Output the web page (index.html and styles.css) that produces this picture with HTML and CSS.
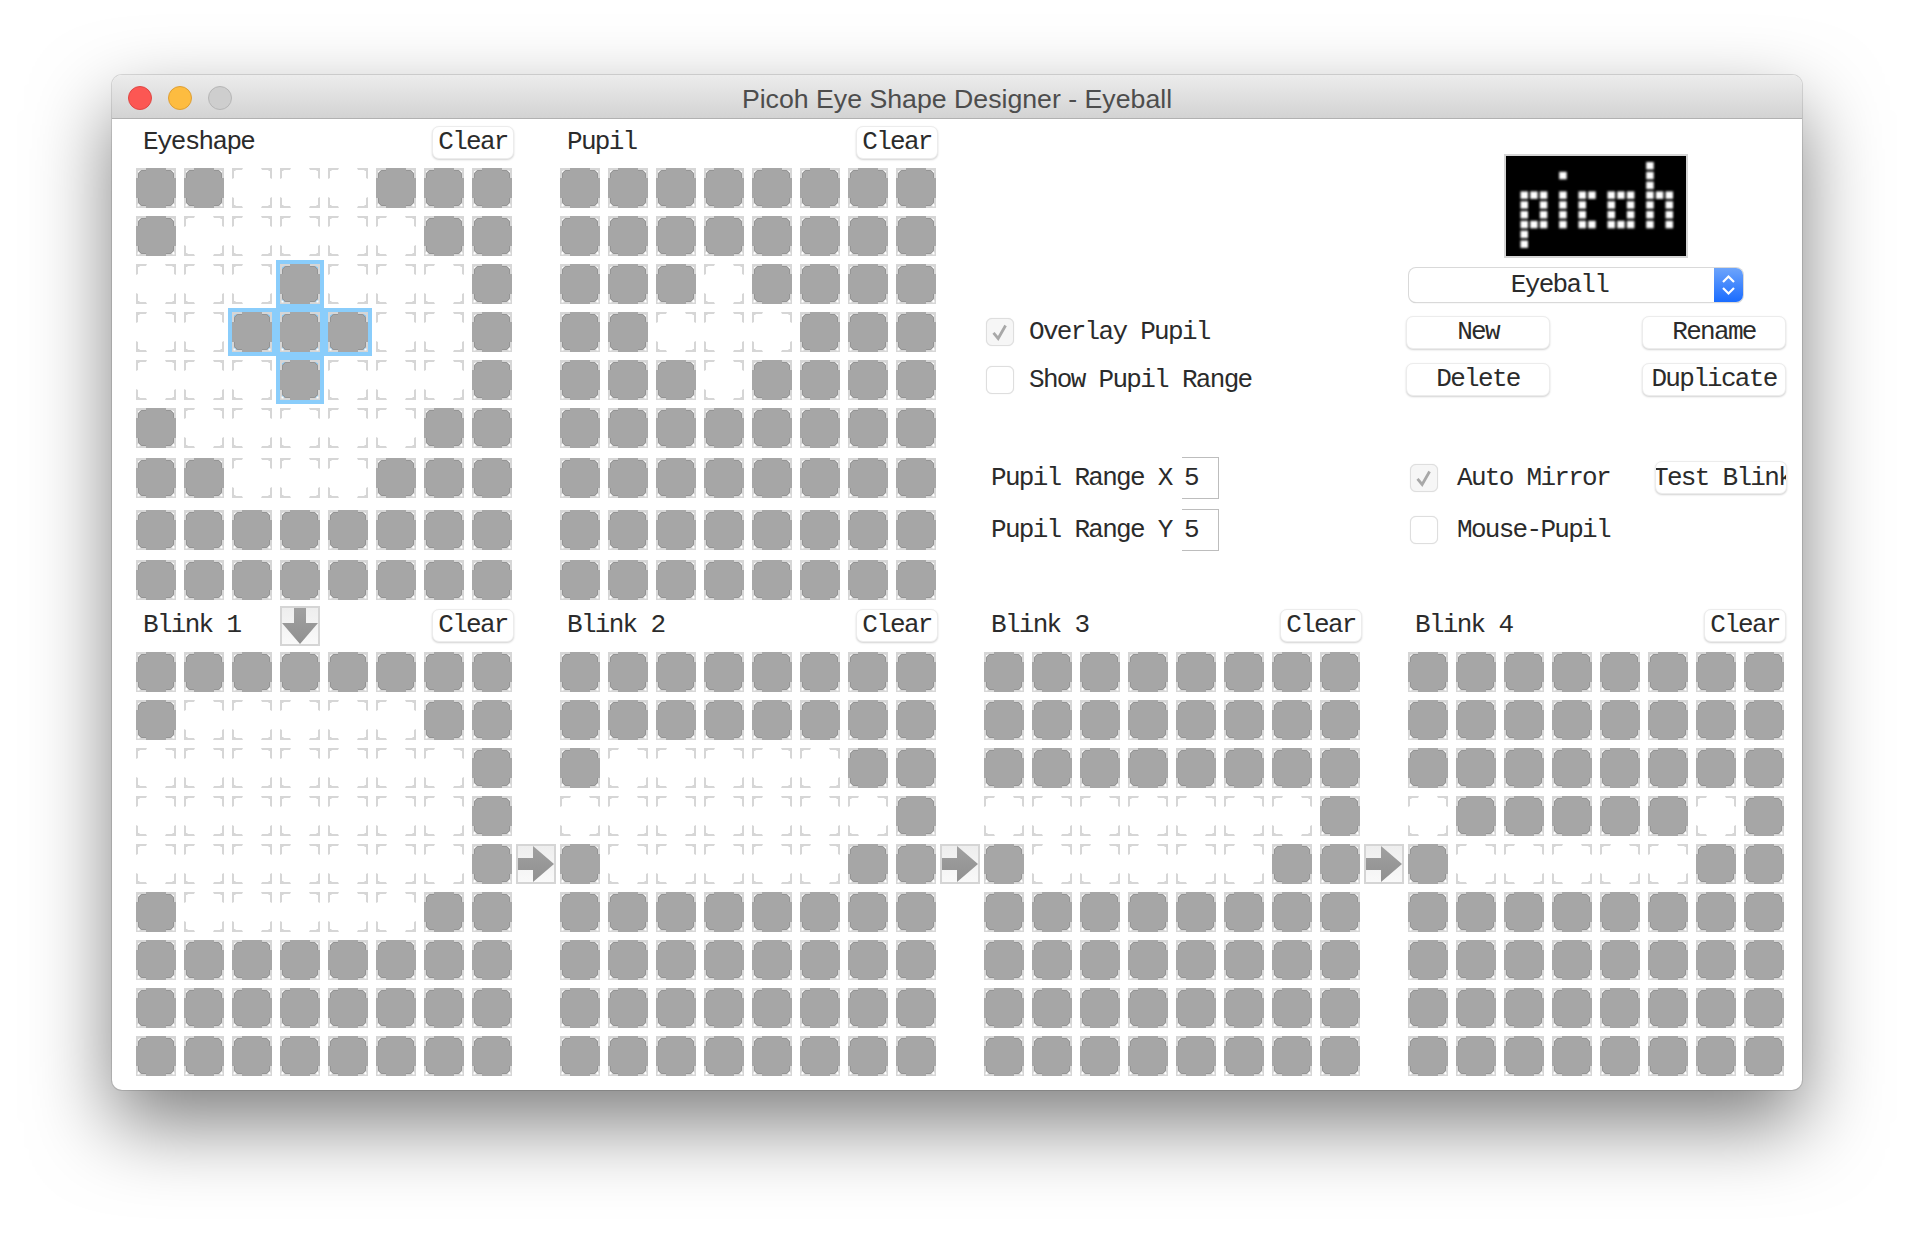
FILE: index.html
```html
<!DOCTYPE html>
<html>
	<head>
		<meta charset="utf-8">
		<title>Picoh Eye Shape Designer - Eyeball</title>
		<link rel="stylesheet" href="styles.css">
	</head>
	<body>
		<svg class="defs">
			<defs>
				<g id="brackets">
					<path id="br" d="M0 0H11L10 2H4L3 3H2V10L0 11Z"/>
					<use href="#br" transform="matrix(-1 0 0 1 40 0)"/>
					<use href="#br" transform="matrix(1 0 0 -1 0 40)"/>
					<use href="#br" transform="matrix(-1 0 0 -1 40 40)"/>
				</g>
				<symbol id="px-off" viewBox="0 0 40 40">
					<use href="#brackets" fill="#d6d6d6"/>
				</symbol>
				<symbol id="px-on" viewBox="0 0 40 40">
					<use href="#brackets" fill="#d6d6d6"/>
					<path fill="#a6a6a6" d="M10 0H30V2H35L38 5V10H40V30H38V35L35 38H30V40H10V38H5L2 35V30H0V10H2V5L5 2H10Z"/>
					<path fill="none" stroke="#949494" d="M10 2.500H5.500L2.500 5.500V10M30 2.500H34.500L37.500 5.500V10M10 37.500H5.500L2.500 34.500V30M30 37.500H34.500L37.500 34.500V30"/>
					<path fill="#fff" d="M36.500 36.500h2v2h-2zM1.500 36.500h2v2h-2z"/>
				</symbol>
				<linearGradient id="arrowfill" x1="0" y1="0" x2="0" y2="1">
					<stop offset="0" stop-color="#a0a0a0"/>
					<stop offset="1" stop-color="#909090"/>
				</linearGradient>
			</defs>
		</svg>

		<div class="window">
			<div class="titlebar">
				<div class="lights">
					<span class="light red"></span>
					<span class="light yellow"></span>
					<span class="light grey"></span>
				</div>
				<div class="title">Picoh Eye Shape Designer - Eyeball</div>
			</div>

			<div class="top">
				<div class="panel">
					<div class="head head-top">
						<span class="txt name">Eyeshape</span>
						<button class="btn clear">Clear</button>
					</div>
					<div class="grid grid-top" data-cells="11000111 10000011 000H0001 00HHH001 000H0001 10000011 11000111 11111111 11111111"></div>
				</div>
				<div class="panel">
					<div class="head head-top">
						<span class="txt name">Pupil</span>
						<button class="btn clear">Clear</button>
					</div>
					<div class="grid grid-top" data-cells="11111111 11111111 11101111 11000111 11101111 11111111 11111111 11111111 11111111"></div>
				</div>

				<div class="side">
					<div class="col-a">
						<label class="check-row">
							<span class="check on"><svg viewBox="0 0 28 28"><path d="M7 15L12 21L20 7" fill="none" stroke="#a8a8a8" stroke-width="3"/></svg></span>
							<span class="txt">Overlay Pupil</span>
						</label>
						<label class="check-row">
							<span class="check"></span>
							<span class="txt">Show Pupil Range</span>
						</label>
						<div class="range first">
							<span class="txt range-label">Pupil Range X</span>
							<div class="num">5</div>
						</div>
						<div class="range">
							<span class="txt range-label">Pupil Range Y</span>
							<div class="num">5</div>
						</div>
					</div>

					<div class="col-b">
						<div class="logo">
							<svg id="logo" width="180" height="100" viewBox="0 0 180 100"
								data-cells="0000000000000100 0000100000000100 0000000000000100 1110101101110111 1010101001010101 1010101001010101 1110101101110101 1000000000000000 1000000000000000">
								<defs><filter id="soft" x="-5%" y="-5%" width="110%" height="110%"><feGaussianBlur stdDeviation="0.8"/></filter></defs>
							</svg>
						</div>
						<div class="select">
							<span class="txt select-text">Eyeball</span>
							<span class="stepper">
								<svg width="29" height="34" viewBox="0 0 29 34"><path d="M9 14L14.500 8.500L20 14M9 20L14.500 25.500L20 20" fill="none" stroke="#fff" stroke-width="2.200"/></svg>
							</span>
						</div>
						<div class="btn-row first">
							<button class="btn wide">New</button>
							<button class="btn wide">Rename</button>
						</div>
						<div class="btn-row">
							<button class="btn wide">Delete</button>
							<button class="btn wide">Duplicate</button>
						</div>
						<div class="opt-row first">
							<span class="check on"><svg viewBox="0 0 28 28"><path d="M7 15L12 21L20 7" fill="none" stroke="#a8a8a8" stroke-width="3"/></svg></span>
							<span class="txt">Auto Mirror</span>
							<button class="btn test">Test Blink</button>
						</div>
						<div class="opt-row">
							<span class="check"></span>
							<span class="txt">Mouse-Pupil</span>
						</div>
					</div>
				</div>
			</div>

			<div class="bottom">
				<div class="panel">
					<div class="head head-low">
						<span class="txt name name-fixed">Blink 1</span>
						<svg class="arrow" viewBox="2 2 36 36"><path fill="url(#arrowfill)" d="M14 2H26V17H38L20 38L2 17H14Z"/></svg>
						<button class="btn clear">Clear</button>
					</div>
					<div class="grid" data-cells="11111111 10000011 00000001 00000001 00000001 10000011 11111111 11111111 11111111"></div>
				</div>
				<div class="link">
					<svg class="arrow" viewBox="2 2 36 36"><path fill="url(#arrowfill)" d="M2 14H17V2L38 20L17 38V26H2Z"/></svg>
				</div>
				<div class="panel">
					<div class="head head-low">
						<span class="txt name">Blink 2</span>
						<button class="btn clear">Clear</button>
					</div>
					<div class="grid" data-cells="11111111 11111111 10000011 00000001 10000011 11111111 11111111 11111111 11111111"></div>
				</div>
				<div class="link">
					<svg class="arrow" viewBox="2 2 36 36"><path fill="url(#arrowfill)" d="M2 14H17V2L38 20L17 38V26H2Z"/></svg>
				</div>
				<div class="panel">
					<div class="head head-low">
						<span class="txt name">Blink 3</span>
						<button class="btn clear">Clear</button>
					</div>
					<div class="grid" data-cells="11111111 11111111 11111111 00000001 10000011 11111111 11111111 11111111 11111111"></div>
				</div>
				<div class="link">
					<svg class="arrow" viewBox="2 2 36 36"><path fill="url(#arrowfill)" d="M2 14H17V2L38 20L17 38V26H2Z"/></svg>
				</div>
				<div class="panel">
					<div class="head head-low">
						<span class="txt name">Blink 4</span>
						<button class="btn clear">Clear</button>
					</div>
					<div class="grid" data-cells="11111111 11111111 11111111 01111101 10000011 11111111 11111111 11111111 11111111"></div>
				</div>
			</div>
		</div>
		<script src="grid.js"></script>
	</body>
</html>
```

FILE: styles.css
```css
*{
	padding: 0;
	margin: 0;
	box-sizing: border-box;
}
body{
	background: #fff;
	padding: 75px 112px 0;
	height: 1238px;
	overflow: hidden;
	font-family: "Liberation Mono", monospace;
	font-size: 26px;
	letter-spacing: -1.7px;
	color: #2b2b2b;
}
.defs{
	position: absolute;
	width: 0;
	height: 0;
}
.window{
	width: 1690px;
	height: 1015px;
	background: #fff;
	border-radius: 10px;
	box-shadow: 0 0 0 1px rgba(0,0,0,0.12), 0 34px 80px rgba(0,0,0,0.5);
}
.titlebar{
	height: 44px;
	display: grid;
	grid-template-columns: 1fr auto 1fr;
	align-items: center;
	padding-left: 16px;
	background: linear-gradient(#ececec, #d3d3d3);
	border-bottom: 1px solid #b1b1b1;
	border-radius: 10px 10px 0 0;
}
.lights{
	display: flex;
	gap: 16px;
	padding-top: 2px;
}
.light{
	width: 24px;
	height: 24px;
	border-radius: 50%;
	border: 1px solid;
}
.red{
	background: #fc5753;
	border-color: #df4744;
}
.yellow{
	background: #fdbc40;
	border-color: #de9f34;
}
.grey{
	background: #cecece;
	border-color: #b6b6b6;
}
.title{
	font-family: "Liberation Sans", sans-serif;
	font-size: 26.7px;
	letter-spacing: 0;
	color: #4d4d4d;
	padding: 6px 16px 0 0;
}

.top{
	display: flex;
	gap: 48px;
	padding-left: 24px;
	height: 487px;
}
.bottom{
	display: flex;
	padding-left: 24px;
}
.panel{
	width: 376px;
	flex: none;
}
.head{
	display: flex;
	align-items: flex-start;
}
.head-top{
	height: 49px;
	padding-top: 7px;
}
.head-low{
	height: 46px;
	padding-top: 3px;
}
.txt{
	white-space: pre;
	padding-bottom: 1px;
}
.name{
	padding-left: 7px;
	height: 33px;
	line-height: 32px;
}
.name-fixed{
	width: 144px;
}
.btn{
	font-family: inherit;
	font-size: inherit;
	letter-spacing: inherit;
	color: inherit;
	background: #fff;
	border: 1px solid #ececec;
	border-radius: 7px;
	box-shadow: 0 1px 2px rgba(0,0,0,0.18);
	height: 33px;
	line-height: 28px;
	padding: 0 0 2px;
	white-space: pre;
	overflow: hidden;
	flex: none;
}
.clear{
	width: 82px;
	margin: 0 -2px 0 auto;
}
.wide{
	width: 144px;
}
.test{
	width: 132px;
	margin-left: auto;
	margin-top: -2px;
	margin-right: -1px;
	padding: 2px 0 0;
	text-align: left;
	text-indent: -3px;
}

.grid{
	display: grid;
	grid-template-columns: repeat(8, 40px);
	grid-auto-rows: 40px;
	gap: 8px;
}
.grid-top{
	grid-template-rows: repeat(5, 40px) 42px 44px 42px 40px;
}
.cell{
	display: block;
	width: 40px;
	height: 40px;
}
.hl{
	box-shadow: 0 0 0 4px #8acdfb;
	background: #8acdfb;
}

.arrow{
	display: block;
	width: 40px;
	height: 40px;
	flex: none;
	border: 2px solid #d5d5d5;
	background: linear-gradient(#eeeeee, #f9f9f9);
}
.head-low .arrow{
	margin-top: -3px;
}
.link{
	width: 48px;
	flex: none;
	padding: 238px 4px 0;
}

.side{
	display: flex;
	flex: none;
	margin-left: -2px;
}
.col-a{
	width: 424px;
	padding: 199px 0 0 4px;
}
.col-b{
	width: 380px;
	padding-top: 35px;
}
.check-row{
	display: flex;
	align-items: center;
	height: 28px;
	gap: 15px;
	margin-bottom: 20px;
}
.check{
	display: block;
	width: 28px;
	height: 28px;
	flex: none;
	background: #fff;
	border: 1px solid #dedede;
	border-radius: 6px;
	box-shadow: 0 0 1px rgba(0,0,0,0.15);
}
.check.on{
	background: #f6f6f6;
}
.check svg{
	display: block;
	width: 26px;
	height: 26px;
}
.range{
	display: flex;
	align-items: center;
	height: 42px;
	margin-bottom: 10px;
	padding-left: 5px;
}
.range.first{
	margin-top: 63px;
}
.range-label{
	width: 191px;
}
.num{
	width: 37px;
	height: 42px;
	line-height: 40px;
	padding-left: 2px;
	border: 1px solid #bdbdbd;
	border-left: 0;
}

.logo{
	width: 184px;
	height: 104px;
	margin-left: 98px;
	background: #000;
	border: 2px solid #d5d5d5;
}
.logo svg{
	display: block;
}
.select{
	display: flex;
	align-items: center;
	width: 334px;
	height: 34px;
	margin: 10px 0 0 3px;
	background: #fff;
	border-radius: 7px;
	box-shadow: 0 0 0 1px #d9d9d9, 0 1px 1px rgba(0,0,0,0.3);
	overflow: hidden;
}
.select-text{
	flex: 1;
	text-align: center;
	line-height: 30px;
	padding: 0 4px 0 0;
}
.stepper{
	width: 29px;
	height: 34px;
	background: linear-gradient(#6da4fb, #1a6cff);
}
.stepper svg{
	display: block;
}
.btn-row{
	display: flex;
	justify-content: space-between;
	margin-top: 14px;
}
.opt-row{
	display: flex;
	align-items: center;
	gap: 19px;
	height: 28px;
	padding-left: 4px;
	margin-top: 24px;
}
.opt-row.first{
	margin-top: 68px;
}
```

FILE: grid.js
```js
// builds the led cells from the data-cells strings
var grids = document.querySelectorAll(".grid");
for (var i = 0; i < grids.length; i++) {
	var rows = grids[i].getAttribute("data-cells").split(" ");
	var html = "";
	for (var r = 0; r < rows.length; r++) {
		for (var c = 0; c < rows[r].length; c++) {
			var ch = rows[r].charAt(c);
			var on = ch !== "0";
			html += '<svg class="cell' + (ch === "H" ? " hl" : "") + '"><use href="#' + (on ? "px-on" : "px-off") + '"/></svg>';
		}
	}
	grids[i].innerHTML = html;
}

// logo dots
var logo = document.getElementById("logo");
var logoRows = logo.getAttribute("data-cells").split(" ");
var group = document.createElementNS("http://www.w3.org/2000/svg", "g");
group.setAttribute("filter", "url(#soft)");
group.setAttribute("fill", "#fff");
for (var y = 0; y < logoRows.length; y++) {
	for (var x = 0; x < logoRows[y].length; x++) {
		if (logoRows[y].charAt(x) === "1") {
			var dot = document.createElementNS("http://www.w3.org/2000/svg", "rect");
			dot.setAttribute("x", 14.5 + x * 9.67);
			dot.setAttribute("y", 6 + y * 9.8);
			dot.setAttribute("width", 7.5);
			dot.setAttribute("height", 7.5);
			group.appendChild(dot);
		}
	}
}
logo.appendChild(group);
```
